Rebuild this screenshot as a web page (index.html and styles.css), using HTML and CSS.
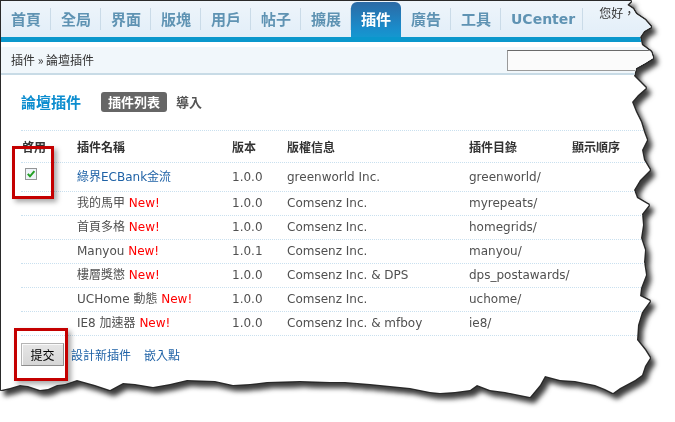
FILE: index.html
```html
<!DOCTYPE html>
<html lang="zh-Hant">
<head>
<meta charset="utf-8">
<title>論壇插件</title>
<link rel="stylesheet" href="styles.css">
</head>
<body>
<div class="sheet">
  <div class="paper">
    <header class="top">
      <ul class="nav">
        <li>首頁</li>
        <li>全局</li>
        <li>界面</li>
        <li>版塊</li>
        <li>用戶</li>
        <li>帖子</li>
        <li>擴展</li>
        <li class="active">插件</li>
        <li>廣告</li>
        <li>工具</li>
        <li class="latin">UCenter</li>
      </ul>
      <div class="greet">您好，</div>
    </header>

    <div class="crumb">
      <span>插件 » 論壇插件</span>
      <input class="search" type="text">
    </div>

    <main class="content">
      <div class="titlebar">
        <h2 class="title">論壇插件</h2>
        <span class="pill">插件列表</span>
        <a class="tab">導入</a>
      </div>

      <div class="table">
        <div class="row head">
          <div>啓用</div><div>插件名稱</div><div>版本</div><div>版權信息</div><div>插件目錄</div><div>顯示順序</div>
        </div>
        <div class="row first">
          <div class="chk">
            <svg width="12" height="12" viewBox="0 0 12 12"><rect x="0.5" y="0.5" width="11" height="11" fill="#eef3f8" stroke="#333" stroke-dasharray="1 1"/><path d="M2.8 5.8 L5 8.3 L9.4 3.2" stroke="#22a022" stroke-width="2" fill="none"/></svg>
          </div>
          <div><a class="link">綠界ECBank金流</a></div><div>1.0.0</div><div>greenworld Inc.</div><div>greenworld/</div><div></div>
        </div>
        <div class="row">
          <div></div><div>我的馬甲 <span class="new">New!</span></div><div>1.0.0</div><div>Comsenz Inc.</div><div>myrepeats/</div><div></div>
        </div>
        <div class="row">
          <div></div><div>首頁多格 <span class="new">New!</span></div><div>1.0.0</div><div>Comsenz Inc.</div><div>homegrids/</div><div></div>
        </div>
        <div class="row">
          <div></div><div>Manyou <span class="new">New!</span></div><div>1.0.1</div><div>Comsenz Inc.</div><div>manyou/</div><div></div>
        </div>
        <div class="row">
          <div></div><div>樓層獎懲 <span class="new">New!</span></div><div>1.0.0</div><div>Comsenz Inc. &amp; DPS</div><div>dps_postawards/</div><div></div>
        </div>
        <div class="row">
          <div></div><div>UCHome 動態 <span class="new">New!</span></div><div>1.0.0</div><div>Comsenz Inc.</div><div>uchome/</div><div></div>
        </div>
        <div class="row">
          <div></div><div>IE8 加速器 <span class="new">New!</span></div><div>1.0.0</div><div>Comsenz Inc. &amp; mfboy</div><div>ie8/</div><div></div>
        </div>
      </div>

      <div class="actions">
        <button class="btn" type="button">提交</button>
        <a class="link">設計新插件</a>
        <a class="link">嵌入點</a>
      </div>
    </main>

    <div class="mark mark-a"></div>
    <div class="mark mark-b"></div>
  </div>
</div>
</body>
</html>
```

FILE: styles.css
```css
* { box-sizing: border-box; margin: 0; padding: 0; }
html, body { background: #fff; }
body {
  width: 675px;
  height: 422px;
  overflow: hidden;
  font: 12px/1.4 "DejaVu Sans", "Noto Sans CJK TC", sans-serif;
  color: #505050;
}

.sheet {
  margin: 1px 0 0 1px;
  width: 674px;
  height: 421px;
  filter: drop-shadow(1px 0 0 #2a2a2a) drop-shadow(-1px 0 0 #2a2a2a)
          drop-shadow(0 1px 0 #2a2a2a) drop-shadow(0 -1px 0 #2a2a2a)
          drop-shadow(4px 5px 2.5px rgba(25, 25, 25, 0.85));
}

.paper {
  position: relative;
  width: 674px;
  height: 421px;
  background: #fff;
  clip-path: polygon(
    0 0, 630px 0, 626px 4px, 632px 8px, 635px 13px, 644px 19px, 650px 26px, 643px 30px,
    639px 36px, 641px 44px, 650px 51px, 652px 57px, 644px 62px, 635px 67px, 633px 75px,
    639px 81px, 645px 87px, 637px 94px, 631px 101px, 635px 111px, 640px 121px, 643px 131px,
    646px 139px, 641px 149px, 643px 159px, 649px 169px, 639px 179px, 633px 189px, 636px 197px,
    648px 204px, 641px 213px, 642px 224px, 640px 237px, 644px 249px, 643px 261px, 645px 274px,
    640px 287px, 639px 295px, 649px 300px, 641px 311px, 637px 324px, 636px 339px, 644px 349px,
    649px 357px, 644px 365px, 641px 374px, 634px 379px, 619px 387px, 612px 392px, 604px 388px,
    594px 384px, 574px 380px, 559px 379px, 544px 375px, 539px 384px, 529px 396px, 519px 394px,
    504px 391px, 489px 389px, 476px 384px, 469px 389px, 454px 391px, 439px 392px, 429px 391px,
    409px 387px, 389px 385px, 369px 383px, 344px 381px, 329px 381px, 299px 380px, 266px 381px,
    249px 383px, 232px 384px, 214px 380px, 186px 379px, 169px 383px, 152px 386px, 134px 383px,
    122px 382px, 109px 389px, 94px 384px, 76px 379px, 64px 383px, 56px 384px, 47px 388px,
    39px 389px, 27px 385px, 19px 384px, 9px 387px, 0 389px
  );
}

/* top navigation */
.top {
  display: flex;
  height: 41px;
  background: linear-gradient(#eef5fb, #e2eef8);
  border-bottom: 5px solid #0a97cc;
}
.nav {
  display: flex;
  list-style: none;
  height: 36px;
}
.nav li {
  width: 50px;
  text-align: center;
  font: bold 15px/36px "Noto Sans CJK TC", sans-serif;
  color: #5f93b3;
  background: linear-gradient(#cadbe8, #cadbe8) right center / 1px 22px no-repeat;
}
.nav li.active {
  margin-top: 1px;
  line-height: 34px;
  color: #fff;
  border-radius: 6px 6px 0 0;
  background: linear-gradient(#2c6aa5, #1a8ccb 75%, #1597cf);
}
.nav li.latin {
  width: auto;
  padding: 0 8px 0 10px;
  font: bold 14px/36px "DejaVu Sans", sans-serif;
}
.greet {
  margin-left: 16px;
  padding-top: 4px;
  font: 12px/16px "Noto Sans CJK TC", sans-serif;
  color: #333;
  white-space: nowrap;
}

/* breadcrumb */
.crumb {
  display: flex;
  align-items: center;
  margin-top: 5px;
  height: 28px;
  padding-left: 10px;
  background: #f1f7fb;
  border-bottom: 2px solid #c8dbe6;
  font: 12px/1 "Noto Sans CJK TC", sans-serif;
  color: #333;
}
.search {
  margin-left: auto;
  margin-right: 18px;
  width: 150px;
  height: 21px;
  border: 1px solid #9a9a9a;
  border-top-color: #6a6a6a;
  background: #fbfbfb;
}

/* content */
.content { padding-left: 20px; }
.titlebar {
  display: flex;
  align-items: center;
  height: 20px;
  margin-top: 17px;
}
.title {
  font: bold 15px/20px "Noto Sans CJK TC", sans-serif;
  color: #0c8dcf;
}
.pill {
  margin-left: 20px;
  padding: 0 7px;
  height: 20px;
  border-radius: 3px;
  background: #666;
  color: #fff;
  font: bold 13px/20px "Noto Sans CJK TC", sans-serif;
}
.tab {
  margin-left: 9px;
  color: #555;
  font: bold 13px/20px "Noto Sans CJK TC", sans-serif;
}

.table {
  margin-top: 18px;
  width: 660px;
  border-top: 1px dotted #c9e0ef;
}
.row {
  display: grid;
  grid-template-columns: 55px 155px 55px 182px 103px 110px;
  align-items: center;
  height: 24px;
  border-bottom: 1px dotted #c9e0ef;
  white-space: nowrap;
}
.row > div { padding-left: 1px; }
.row.head {
  height: 32px;
  font: bold 12px "Noto Sans CJK TC", sans-serif;
  color: #333;
}
.row.first { height: 29px; }
.chk { display: flex; padding-left: 4px !important; margin-top: -7px; }
.link { color: #1f62a6; text-decoration: none; }
.new { color: #f00; }

.actions {
  display: flex;
  align-items: center;
  margin-top: 7px;
}
.btn {
  width: 43px;
  height: 23px;
  border: 1px solid #8e8e8e;
  border-top-color: #b5b5b5;
  border-left-color: #b5b5b5;
  box-shadow: inset 1px 1px 0 #fafafa;
  background: linear-gradient(#e6e6e6, #d6d6d6);
  font: 12px/1 "Noto Sans CJK TC", sans-serif;
  color: #000;
}
.actions .link {
  margin-left: 7px;
  font: 12px/1 "Noto Sans CJK TC", sans-serif;
}
.actions .link + .link { margin-left: 13px; }

/* red annotation boxes */
.mark {
  position: absolute;
  border: 3px solid #c40000;
  box-shadow: 3px 3px 5px rgba(0, 0, 0, 0.35);
}
.mark-a { left: 11px; top: 145px; width: 42px; height: 53px; }
.mark-b { left: 13px; top: 327px; width: 54px; height: 53px; }
```
